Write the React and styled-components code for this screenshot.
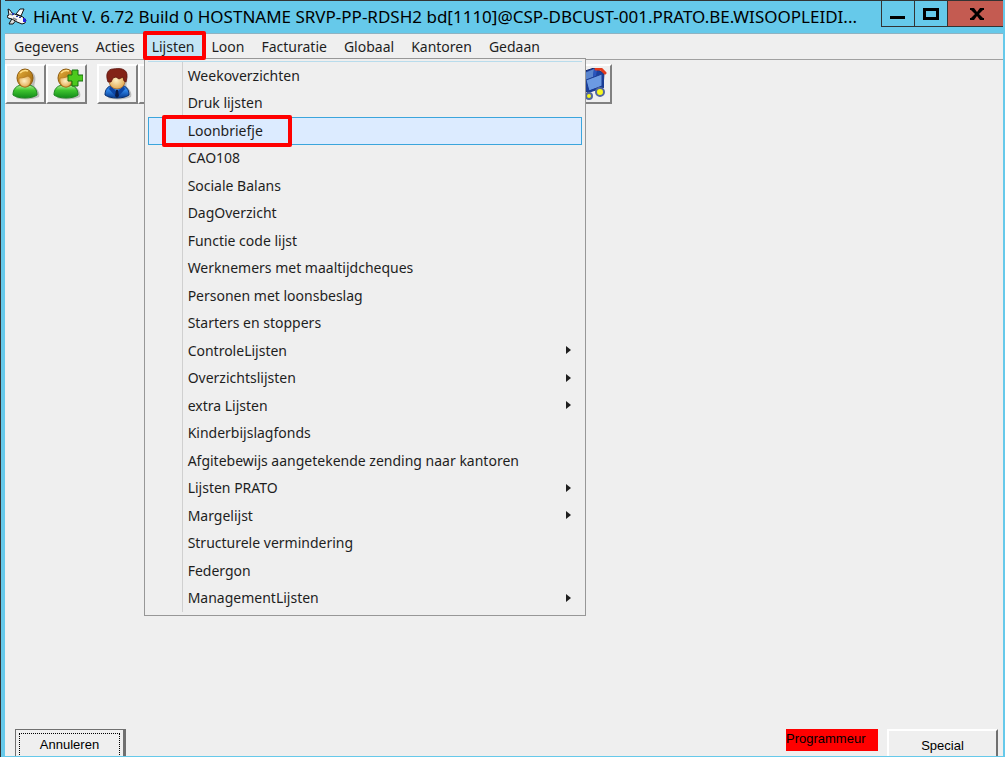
import { useState } from 'react';
import styled, { createGlobalStyle } from 'styled-components';

const menus = [
    'Gegevens',
    'Acties',
    'Lijsten',
    'Loon',
    'Facturatie',
    'Globaal',
    'Kantoren',
    'Gedaan',
];

const lijsten = [
    { label: 'Weekoverzichten' },
    { label: 'Druk lijsten' },
    { label: 'Loonbriefje', marked: true },
    { label: 'CAO108' },
    { label: 'Sociale Balans' },
    { label: 'DagOverzicht' },
    { label: 'Functie code lijst' },
    { label: 'Werknemers met maaltijdcheques' },
    { label: 'Personen met loonsbeslag' },
    { label: 'Starters en stoppers' },
    { label: 'ControleLijsten', sub: true },
    { label: 'Overzichtslijsten', sub: true },
    { label: 'extra Lijsten', sub: true },
    { label: 'Kinderbijslagfonds' },
    { label: 'Afgitebewijs aangetekende zending naar kantoren' },
    { label: 'Lijsten PRATO', sub: true },
    { label: 'Margelijst', sub: true },
    { label: 'Structurele vermindering' },
    { label: 'Federgon' },
    { label: 'ManagementLijsten', sub: true },
];

const PlaneIcon = () => (
    <svg width='20' height='18' viewBox='0 0 20 18' aria-hidden='true'>
        {/* wings */}
        <path d='M9 6l4-5h4l-3 7z' fill='#fff' stroke='#111' />
        <path d='M6 9l4 2-4 5H2l1-2z' fill='#ddd' stroke='#111' />
        {/* fuselage and tail */}
        <path
            d='M1 1l2 1 2 3 5 2 6 2 3 3-1 3-3 1-5-2-5-3-4-1-1-2 2-1z'
            fill='#f4f4f4'
            stroke='#111'
        />
        <path d='M3 6l3 1M6 10l4 2' stroke='#888' strokeWidth='1.5' />
        <path d='M16 10h2l1 2v2h-3z' fill='#2222dd' />
        <path d='M5 5h2v2H5zM9 8h2v1H9zM12 9h2v1h-2z' fill='#2233aa' />
    </svg>
);

const PersonIcon = ({ plus, dark }) => {
    const id = dark ? 'dark' : plus ? 'plus' : 'plain';
    return (
        <svg width='32' height='32' viewBox='0 0 32 32' aria-hidden='true'>
            <defs>
                <linearGradient id={`shirt-${id}`} x1='0' y1='0' x2='0' y2='1'>
                    <stop offset='0' stopColor={dark ? '#1c62c8' : '#b8f29a'} />
                    <stop offset='.4' stopColor={dark ? '#2f86ea' : '#3fc52f'} />
                    <stop offset='1' stopColor={dark ? '#06398f' : '#128a1a'} />
                </linearGradient>
                <linearGradient id={`hair-${id}`} x1='0' y1='0' x2='1' y2='1'>
                    <stop offset='0' stopColor='#e8b03c' />
                    <stop offset='1' stopColor='#98600a' />
                </linearGradient>
                <radialGradient id={`face-${id}`} cx='.45' cy='.45' r='.6'>
                    <stop offset='0' stopColor='#fff0c4' />
                    <stop offset='1' stopColor='#e0a64c' />
                </radialGradient>
            </defs>
            {/* shadow */}
            <path
                d='M14 3c8-2 13 4 11 11-1 3-1 4 1 6 3 3 4 6 3 9-6 3-18 3-23 1z'
                fill='#999'
                opacity='.6'
            />
            <path
                d='M3 27c0-6 3-9 8-10h8c5 1 8 4 8 10-5 4-19 4-24 0z'
                fill={`url(#shirt-${id})`}
                stroke={dark ? '#062f70' : '#1d861f'}
            />
            {dark ? (
                <>
                    <path d='M9 18l6 6 6-6 2 3-7 8h-2l-7-8z' fill='#0c45a5' />
                    <path d='M14 22h2l1 6-2 2-2-2z' fill='#0b1c48' />
                    <ellipse
                        cx='15'
                        cy='13'
                        rx='8'
                        ry='8'
                        fill={`url(#face-${id})`}
                        stroke='#a8682c'
                        strokeWidth='.8'
                    />
                    <path
                        d='M6 14C3 6 6 1 11 1c6-1 15-1 14 8l-1 5-2-1-1-4-4 2-3-2-3 1-2 4z'
                        fill='#832317'
                        stroke='#5a130c'
                        strokeWidth='.8'
                    />
                </>
            ) : (
                <>
                    <ellipse
                        cx='15'
                        cy='10'
                        rx='8'
                        ry='9'
                        fill={`url(#hair-${id})`}
                        stroke='#8d5a0e'
                    />
                    <path
                        d='M9 10c4 0 7-1 9-2 2 1 2 2 3 3 0 5-3 8-6 8s-7-3-6-9z'
                        fill={`url(#face-${id})`}
                        stroke='#b0741c'
                        strokeWidth='.7'
                    />
                    <path
                        d='M10 5c2-2 5-3 8-2'
                        fill='none'
                        stroke='#ffe08a'
                        strokeWidth='1.5'
                    />
                </>
            )}
            {plus && (
                <path
                    d='M21 2h6v5h5v6h-5v5h-6v-5h-4V7h4z'
                    fill='#4cc91d'
                    stroke='#176e10'
                />
            )}
        </svg>
    );
};

const CartIcon = () => (
    <svg width='32' height='32' viewBox='0 0 32 32' aria-hidden='true'>
        <path d='M3 5L18 0l10 5-1 15-16 4-6-4z' fill='#1c3f9c' stroke='#14296b' />
        <path d='M6 6l12-5-1 8-9 4z' fill='#5b86cf' />
        <path d='M18 1l3 1-1 6-3 1z' fill='#2a55bd' />
        <path d='M10 12l16-6v12l-13 5z' fill='#6c9ae2' stroke='#1b3d94' />
        <path d='M27 7v12l-15 5v3' fill='none' stroke='#1b3d94' strokeWidth='2' />
        <path
            d='M20 1h5l4 4'
            fill='none'
            stroke='#e33a1d'
            strokeWidth='3'
            strokeLinecap='round'
        />
        <circle cx='24' cy='24' r='4' fill='#f7f71c' stroke='#53679c' strokeWidth='2' />
        <circle cx='13' cy='28' r='3' fill='#f7f71c' stroke='#53679c' strokeWidth='2' />
    </svg>
);

const App = () => {
    const [openMenu, setOpenMenu] = useState('Lijsten');

    return (
        <Window>
            <GlobalStyle />
            <TitleBar>
                <PlaneIcon />
                <Title>
                    HiAnt V. 6.72 Build 0 HOSTNAME SRVP-PP-RDSH2
                    bd[1110]@CSP-DBCUST-001.PRATO.BE.WISOOPLEIDI...
                </Title>
                <WindowButtons>
                    <WindowButton aria-label='Minimaliseren'>
                        <svg width='16' height='12' viewBox='0 0 16 12'>
                            <path d='M0 8h15v3H0z' />
                        </svg>
                    </WindowButton>
                    <WindowButton aria-label='Maximaliseren'>
                        <svg width='16' height='12' viewBox='0 0 16 12'>
                            <path d='M0 0h16v12H0zM3 3v6h10V3z' fillRule='evenodd' />
                        </svg>
                    </WindowButton>
                    <WindowButton $close aria-label='Sluiten'>
                        <svg width='14' height='12' viewBox='0 0 14 12'>
                            <path d='M0 0h4l3 4 3-4h4v2h-1L9 6l4 4h1v2h-4L7 8l-3 4H0v-2h1l4-4-4-4H0z' />
                        </svg>
                    </WindowButton>
                </WindowButtons>
            </TitleBar>

            <MenuBar>
                {menus.map((name) => (
                    <MenuItem key={name}>
                        <MenuButton
                            $open={name === openMenu}
                            onClick={() =>
                                setOpenMenu(name === openMenu ? null : name)
                            }
                        >
                            {name}
                        </MenuButton>
                        {name === 'Lijsten' && <MenuMark />}
                        {name === 'Lijsten' && openMenu === name && (
                            <Dropdown>
                                {lijsten.map(({ label, marked, sub }) => (
                                    <Row key={label}>
                                        <RowButton $active={marked}>
                                            {label}
                                            {sub && <Arrow />}
                                        </RowButton>
                                        {marked && <RowMark />}
                                    </Row>
                                ))}
                            </Dropdown>
                        )}
                    </MenuItem>
                ))}
            </MenuBar>

            <Toolbar>
                <ToolGroup>
                    <ToolButton aria-label='Persoon'>
                        <PersonIcon />
                    </ToolButton>
                    <ToolButton aria-label='Persoon toevoegen'>
                        <PersonIcon plus />
                    </ToolButton>
                </ToolGroup>
                <ToolGroup $wide>
                    <ToolButton aria-label='Klant'>
                        <PersonIcon dark />
                    </ToolButton>
                    <ToolButton aria-label='Klant toevoegen'>
                        <PersonIcon dark plus />
                    </ToolButton>
                </ToolGroup>
                <ToolButton aria-label='Winkelwagen'>
                    <CartIcon />
                </ToolButton>
            </Toolbar>

            <Footer>
                <FooterButton $focused>
                    <span>Annuleren</span>
                </FooterButton>
                <Role>Programmeur</Role>
                <FooterButton>
                    <span>Special</span>
                </FooterButton>
            </Footer>
        </Window>
    );
};

export default App;

const GlobalStyle = createGlobalStyle`
    * {
        box-sizing: border-box;
    }

    body {
        margin: 0;
    }

    button {
        margin: 0;
        padding: 0;
        border: 0;
        border-radius: 0;
        background: none;
        color: inherit;
        font: inherit;
    }
`;

const Window = styled.div`
    display: flex;
    flex-direction: column;
    height: 100vh;
    overflow: hidden;
    border: solid #66c9ea;
    border-width: 0 2px 1px 4px;
    outline: 1px solid #333;
    margin-left: 1px;
    background: #efefef;
    color: #1e1e1e;
    font-family: 'Noto Sans', 'Open Sans', sans-serif;
    font-size: 14px;
`;

const TitleBar = styled.header`
    display: flex;
    align-items: center;
    flex: none;
    height: 34px;
    margin-right: -2px;
    gap: 6px;
    padding-left: 2px;
    border-top: 1px solid #333;
    border-bottom: 1px solid #8fb3c2;
    background: #66c9ea;

    svg {
        flex: none;
    }
`;

const Title = styled.h1`
    flex: 1;
    min-width: 0;
    margin: 0;
    overflow: hidden;
    white-space: nowrap;
    font-size: 17px;
    line-height: 32px;
    font-weight: 400;
    color: #000;
`;

const WindowButtons = styled.div`
    display: flex;
    align-self: flex-start;
`;

const WindowButton = styled.button`
    display: flex;
    align-items: center;
    justify-content: center;
    width: ${({ $close }) => ($close ? '58px' : '33px')};
    height: 26px;
    border: solid #333;
    border-width: 0 0 1px 1px;
    background: ${({ $close }) => ($close ? '#c45b51' : 'none')};
`;

const MenuBar = styled.nav`
    display: flex;
    flex: none;
    height: 26px;
    padding-left: 1px;
    border-bottom: 1px solid #a0a0a0;
`;

const MenuItem = styled.div`
    position: relative;
`;

const MenuButton = styled.button`
    height: 24px;
    padding: 0 9px 0 8px;
    background: ${({ $open }) => ($open ? '#c3e5f5' : 'none')};
`;

const MenuMark = styled.span`
    position: absolute;
    z-index: 2;
    inset: -3px -2px -1px -1px;
    border: 4px solid #ff0000;
    border-radius: 2px;
    pointer-events: none;
`;

const Dropdown = styled.ul`
    position: absolute;
    z-index: 1;
    top: 24px;
    left: 0;
    width: 442px;
    margin: 0;
    padding: 3px;
    border: 1px solid #979797;
    list-style: none;
    background:
        linear-gradient(#b9dcec, #b9dcec) 3px 2px / 434px 1px no-repeat,
        linear-gradient(#d0d0d0, #d0d0d0) 37px 3px / 1px 550px no-repeat,
        #efefef;
`;

const Row = styled.li`
    position: relative;
    height: 27px;

    &:nth-child(odd) {
        height: 28px;
    }
`;

const RowButton = styled.button`
    display: flex;
    align-items: center;
    justify-content: space-between;
    width: 100%;
    height: 100%;
    padding: 0 10px 2px 39px;
    border: 1px solid ${({ $active }) => ($active ? '#3ba5dc' : 'transparent')};
    background: ${({ $active }) => ($active ? '#dcebff' : 'none')};
`;

const RowMark = styled.span`
    position: absolute;
    inset: -2px auto -2px 14px;
    width: 130px;
    border: 4px solid #ff0000;
    border-radius: 2px;
    pointer-events: none;
`;

const Arrow = styled.span`
    border: solid transparent;
    border-width: 4px 0 4px 5px;
    border-left-color: #1e1e1e;
`;

const Toolbar = styled.div`
    display: flex;
    flex: 1;
    align-items: flex-start;
    padding-top: 4px;
`;

const ToolGroup = styled.div`
    display: flex;
    width: ${({ $wide }) => ($wide ? '474px' : '92px')};
`;

const ToolButton = styled.button`
    display: flex;
    align-items: center;
    justify-content: center;
    width: 41px;
    height: 40px;
    border: solid;
    border-width: 2px;
    border-color: #fff #808080 #808080 #fff;
`;

const Footer = styled.footer`
    display: flex;
    flex: none;
    align-items: flex-start;
    height: 27px;
    padding: 0 5px 0 10px;
    overflow: hidden;
    color: #000;
    font-family: 'Liberation Sans', Arial, sans-serif;
    font-size: 13px;
`;

const FooterButton = styled.button`
    width: 111px;
    height: 30px;
    padding: 3px;
    border: solid;
    border-width: ${({ $focused }) => ($focused ? '1px 3px 3px 1px' : '2px')};
    border-color: ${({ $focused }) =>
        $focused ? '#707070' : '#fff #707070 #707070 #fff'};

    span {
        display: block;
        border: 1px ${({ $focused }) => ($focused ? 'dotted #000' : 'solid transparent')};
        line-height: 22px;
    }
`;

const Role = styled.div`
    width: 92px;
    height: 22px;
    margin: 0 9px 0 auto;
    background: #ff0000;
    line-height: 20px;
`;
